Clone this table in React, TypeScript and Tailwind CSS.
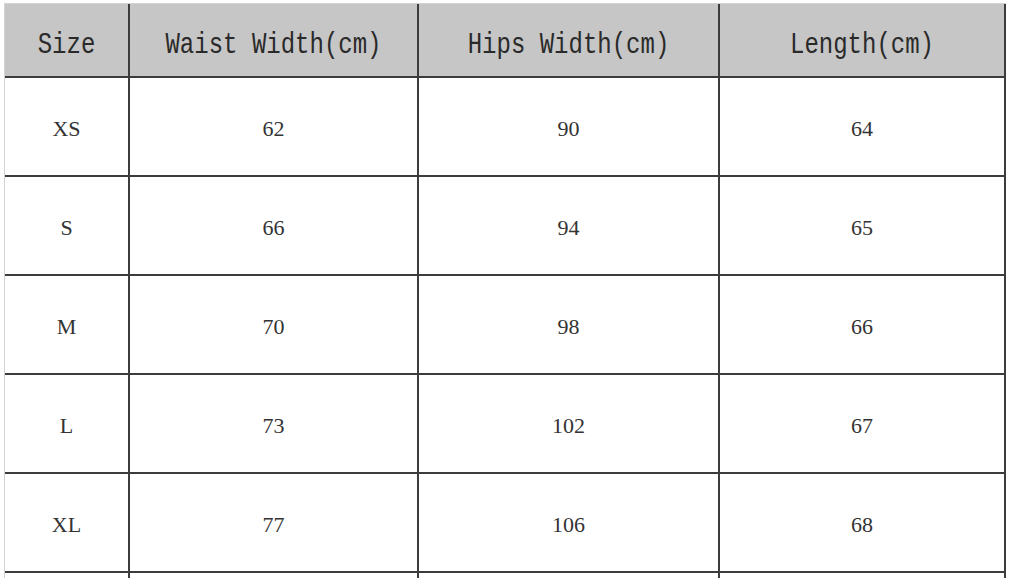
const headers = ["Size", "Waist Width(cm)", "Hips Width(cm)", "Length(cm)"];

const rows = [
  ["XS", "62", "90", "64"],
  ["S", "66", "94", "65"],
  ["M", "70", "98", "66"],
  ["L", "73", "102", "67"],
  ["XL", "77", "106", "68"],
];

function App() {
  return (
    <div className="h-[578px] w-[1010px] overflow-hidden bg-white pl-[4px] pt-[3px]">
      <div className="grid w-[1002px] grid-cols-[125px_289px_301px_286px] border-l border-t border-[#d4d4d4]">
        {headers.map((h) => (
          <div
            key={h}
            className="flex h-[74px] items-center justify-center border-b-2 border-r-2 border-[#3c3c3c] bg-[#c6c6c6] pt-[10px] font-['Liberation_Mono',monospace] text-[24px] text-[#2a2a2a]"
          >
            <span className="inline-block scale-y-[1.25]">{h}</span>
          </div>
        ))}
        {rows.map((row) =>
          row.map((cell, i) => (
            <div
              key={row[0] + i}
              className="flex h-[99px] items-center justify-center border-b-2 border-r-2 border-[#3c3c3c] pt-[4px] font-['Liberation_Serif',serif] text-[22px] text-[#333333]"
            >
              {cell}
            </div>
          ))
        )}
        {headers.map((h) => (
          <div key={"blank" + h} className="h-[40px] border-r-2 border-[#3c3c3c]" />
        ))}
      </div>
    </div>
  );
}

export default App;
